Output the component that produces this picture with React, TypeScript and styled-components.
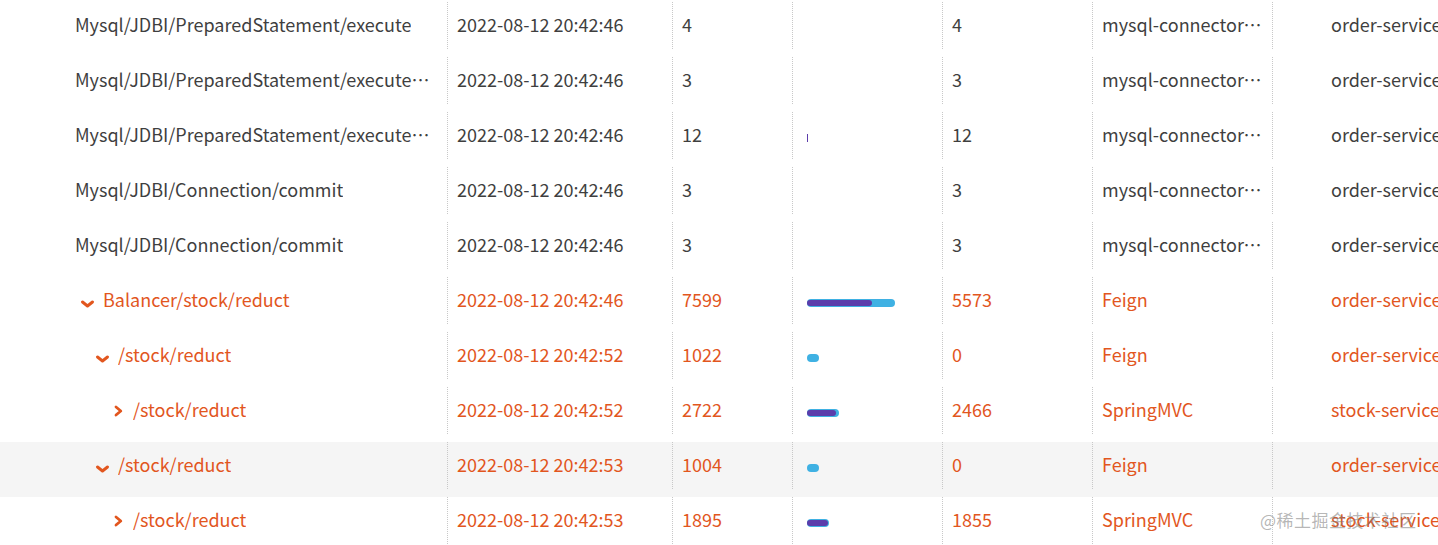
import * as React from "react";
import styled, { createGlobalStyle } from "styled-components";

const GlobalStyle = createGlobalStyle`
  html, body {
    margin: 0;
    padding: 0;
    background: #ffffff;
    overflow: hidden;
  }
  body {
    font-family: "Noto Sans CJK SC", "Noto Sans", sans-serif;
  }
`;

const COLOURS = {
  TEXT: "#3f3f3f",
  ACTIVE: "#e2561e",
  DIVIDER: "#c8c8c8",
  HOVER: "#f5f5f5",
  BAR: "#3fb1e3",
  SELF: "#5c3dab",
};

type Row = {
  name: string;
  time: string;
  duration: number;
  self: number;
  component: string;
  service: string;
  level?: number;
  toggle?: "open" | "closed";
  active?: boolean;
  hover?: boolean;
};

const rows: Row[] = [
  { name: "Mysql/JDBI/PreparedStatement/execute", time: "2022-08-12 20:42:46", duration: 4, self: 4, component: "mysql-connector-java", service: "order-service" },
  { name: "Mysql/JDBI/PreparedStatement/executeQuery", time: "2022-08-12 20:42:46", duration: 3, self: 3, component: "mysql-connector-java", service: "order-service" },
  { name: "Mysql/JDBI/PreparedStatement/executeUpdate", time: "2022-08-12 20:42:46", duration: 12, self: 12, component: "mysql-connector-java", service: "order-service" },
  { name: "Mysql/JDBI/Connection/commit", time: "2022-08-12 20:42:46", duration: 3, self: 3, component: "mysql-connector-java", service: "order-service" },
  { name: "Mysql/JDBI/Connection/commit", time: "2022-08-12 20:42:46", duration: 3, self: 3, component: "mysql-connector-java", service: "order-service" },
  { name: "Balancer/stock/reduct", time: "2022-08-12 20:42:46", duration: 7599, self: 5573, component: "Feign", service: "order-service", level: 0, toggle: "open", active: true },
  { name: "/stock/reduct", time: "2022-08-12 20:42:52", duration: 1022, self: 0, component: "Feign", service: "order-service", level: 1, toggle: "open", active: true },
  { name: "/stock/reduct", time: "2022-08-12 20:42:52", duration: 2722, self: 2466, component: "SpringMVC", service: "stock-service", level: 2, toggle: "closed", active: true },
  { name: "/stock/reduct", time: "2022-08-12 20:42:53", duration: 1004, self: 0, component: "Feign", service: "order-service", level: 1, toggle: "open", active: true, hover: true },
  { name: "/stock/reduct", time: "2022-08-12 20:42:53", duration: 1895, self: 1855, component: "SpringMVC", service: "stock-service", level: 2, toggle: "closed", active: true },
];

const PX_PER_MS = 1 / 86.4;

const Page = styled.div`
  position: relative;
  width: 1438px;
  height: 545px;
  overflow: hidden;
`;

const Table = styled.div`
  margin-top: 2px;
  width: 1560px;
`;

const TableRow = styled.div<{ $active?: boolean; $hover?: boolean }>`
  display: grid;
  grid-template-columns: 447px 225px 120px 150px 150px 180px 288px;
  height: 55px;
  color: ${(p) => (p.$active ? COLOURS.ACTIVE : COLOURS.TEXT)};
  background: ${(p) => (p.$hover ? COLOURS.HOVER : "transparent")};
  font-size: 18px;
`;

const Cell = styled.div<{ $pad?: number }>`
  position: relative;
  display: flex;
  align-items: center;
  min-width: 0;
  padding-left: ${(p) => p.$pad ?? 10}px;
  padding-right: 10px;
  padding-bottom: 12px;
  white-space: nowrap;
  &::before {
    content: "";
    position: absolute;
    left: 0;
    top: 0;
    bottom: 8px;
    border-left: 1px dotted ${COLOURS.DIVIDER};
  }
`;

const NameCell = styled.div<{ $indent: number }>`
  display: flex;
  align-items: center;
  min-width: 0;
  padding-left: ${(p) => p.$indent}px;
  padding-right: 16px;
  padding-bottom: 12px;
  white-space: nowrap;
`;

const Ellipsis = styled.span`
  overflow: hidden;
  text-overflow: ellipsis;
  white-space: nowrap;
  min-width: 0;
`;

const Toggle = styled.svg`
  flex: none;
  width: 15px;
  height: 15px;
  margin-right: 8px;
  overflow: visible;
`;

const Track = styled.div`
  position: relative;
  height: 8px;
  width: 120px;
  margin-top: 8px;
`;

const TotalBar = styled.div`
  position: absolute;
  left: 0;
  top: 0;
  height: 8px;
  border-radius: 4px;
  background: ${COLOURS.BAR};
`;

const SelfBar = styled.div<{ $thin?: boolean }>`
  position: absolute;
  left: 0;
  top: ${(p) => (p.$thin ? 0 : 1)}px;
  height: ${(p) => (p.$thin ? 8 : 6)}px;
  border-radius: ${(p) => (p.$thin ? 0 : 3)}px;
  background: ${COLOURS.SELF};
`;

const Watermark = styled.div`
  position: absolute;
  left: 1260px;
  top: 507px;
  font-size: 17px;
  letter-spacing: 0.5px;
  color: rgba(120, 120, 120, 0.55);
  font-family: "Noto Sans CJK SC", sans-serif;
  pointer-events: none;
`;

const ToggleIcon = ({ kind }: { kind: "open" | "closed" }) => (
  <Toggle viewBox="0 0 15 15">
    {kind === "open" ? (
      <polyline
        points="2.5,11 7.5,15 12.5,11"
        fill="none"
        stroke={COLOURS.ACTIVE}
        strokeWidth="3"
        strokeLinecap="round"
        strokeLinejoin="round"
      />
    ) : (
      <polyline
        points="6,6 10.8,10 6,14"
        fill="none"
        stroke={COLOURS.ACTIVE}
        strokeWidth="2.8"
        strokeLinecap="round"
        strokeLinejoin="round"
      />
    )}
  </Toggle>
);

const DurationBar = ({ duration, self }: { duration: number; self: number }) => {
  const total = duration * PX_PER_MS;
  const own = self * PX_PER_MS;
  if (total < 1) {
    return (
      <Track>{own > 0.1 && <SelfBar $thin style={{ width: 1 }} />}</Track>
    );
  }
  return (
    <Track>
      <TotalBar style={{ width: Math.max(total, 11) }} />
      {own > 1 && <SelfBar style={{ width: own }} />}
    </Track>
  );
};

export default function App() {
  return (
    <Page>
      <GlobalStyle />
      <Table>
        {rows.map((r, ix) => (
          <TableRow key={ix} $active={r.active} $hover={r.hover}>
            <NameCell $indent={r.toggle ? 80 + (r.level ?? 0) * 15 : 75}>
              {r.toggle && <ToggleIcon kind={r.toggle} />}
              <Ellipsis>{r.name}</Ellipsis>
            </NameCell>
            <Cell>{r.time}</Cell>
            <Cell>{r.duration}</Cell>
            <Cell $pad={15}>
              <DurationBar duration={r.duration} self={r.self} />
            </Cell>
            <Cell>{r.self}</Cell>
            <Cell>
              <Ellipsis>{r.component}</Ellipsis>
            </Cell>
            <Cell $pad={59}>{r.service}</Cell>
          </TableRow>
        ))}
      </Table>
      <Watermark>@稀土掘金技术社区</Watermark>
    </Page>
  );
}
